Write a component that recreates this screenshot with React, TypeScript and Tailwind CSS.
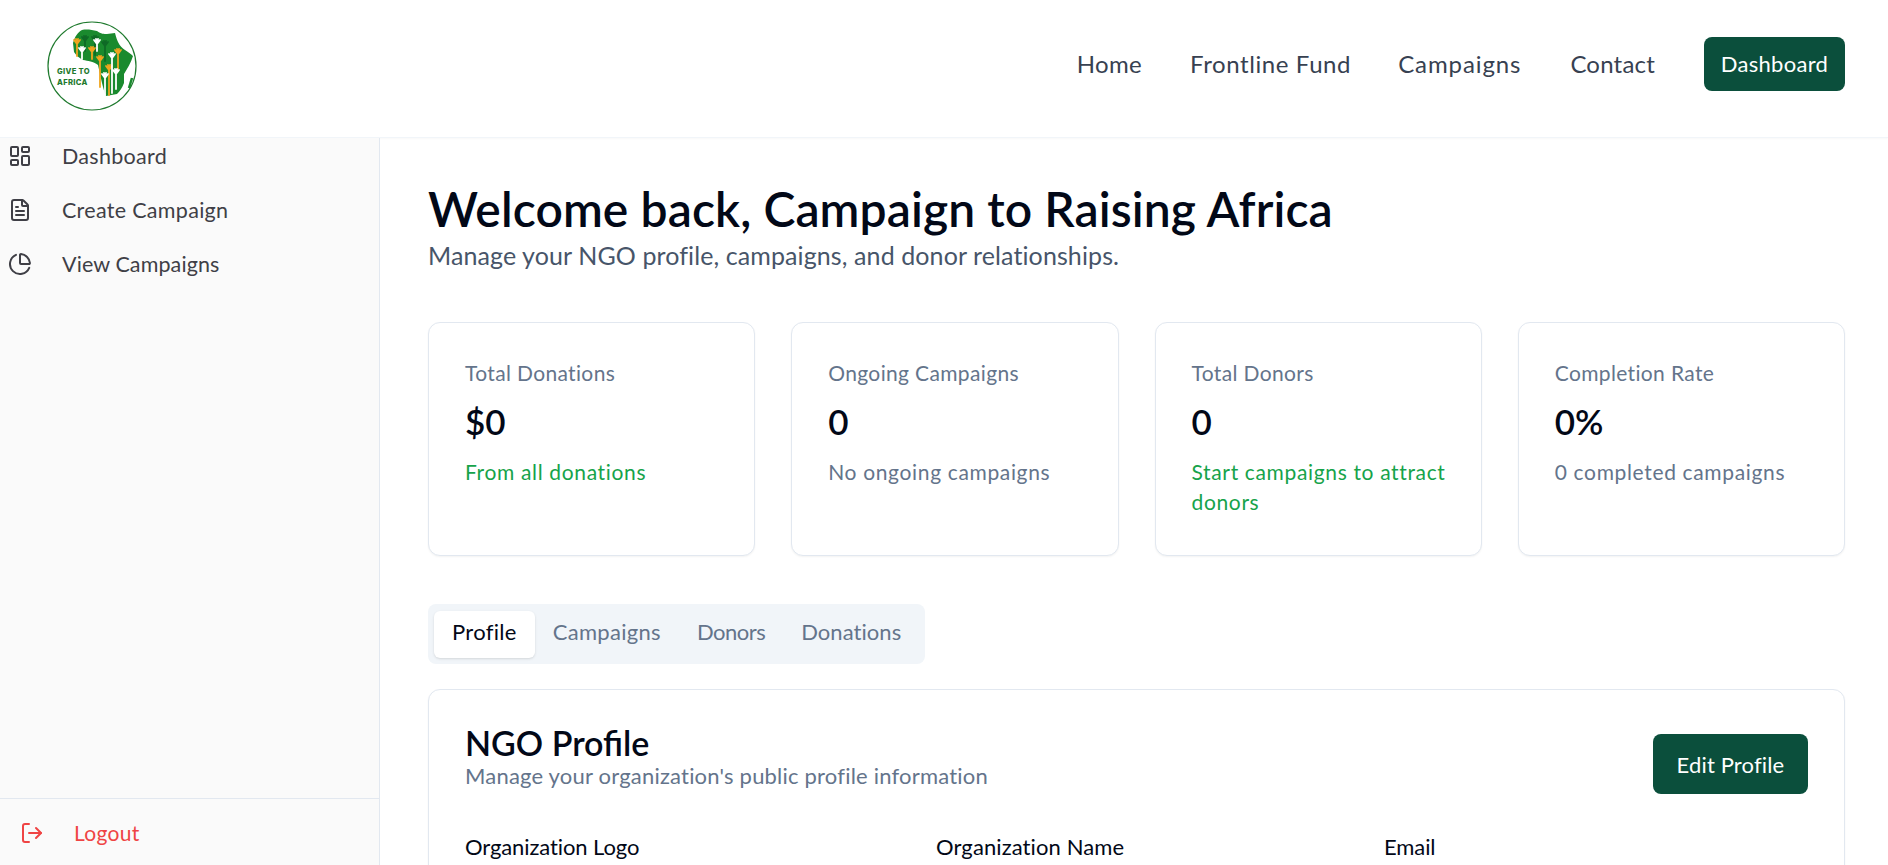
import { LayoutDashboard, FileText, PieChart, LogOut } from "lucide-react";

const font = "font-['Lato','Noto_Sans',sans-serif]";

// x, top of the fingers, bottom of the arm, colour
const hands: [number, number, number, string][] = [
  [38, 15, 30, "#0f6a26"],
  [48, 15, 34, "#0f6a26"],
  [58, 20, 40, "#0f6a26"],
  [30, 18, 35, "#f0a51e"],
  [45, 26, 38, "#f0a51e"],
  [53, 35, 66, "#f0a51e"],
  [62, 44, 74, "#f0a51e"],
  [71, 28, 50, "#f0a51e"],
  [35, 26, 38, "#fff"],
  [50, 18, 30, "#fff"],
  [65, 32, 72, "#fff"],
  [58, 52, 74, "#fff"],
  [69, 48, 68, "#fff"],
];

function Logo() {
  return (
    <svg viewBox="0 0 90 90" className="mt-[5px] h-[90px] w-[90px]">
      <circle cx="45" cy="45" r="44" fill="#fff" stroke="#1f7a2e" strokeWidth="1.2" />
      <path
        d="M26 22 C28 15 31 11 35 9 C40 8 45 9 50 10 C54 13 57 13 60 13 L68 12 C69 16 70 19 71 21 C73 25 75 27 78 29 C81 31 84 33 86 35 C84 42 80 48 77 53 L77 62 C75 67 73 70 70 73 L59 75 C57 70 56 66 55 62 L51 44 C46 40 41 40 36 39 C32 37 29 34 27 31 Z"
        fill="#1a8a2e"
      />
      <path d="M85 57 L82 67" stroke="#1a8a2e" strokeWidth="2.5" />
      {hands.map(([x, top, bottom, color], i) => (
        <path
          key={i}
          d={`M${x} ${bottom} V${top + 5} M${x} ${top + 5} l-3 -4 M${x} ${top + 5} l-1 -5 M${x} ${top + 5} l1 -5 M${x} ${top + 5} l3 -4`}
          stroke={color}
          strokeWidth="1.8"
          strokeLinecap="round"
          fill="none"
        />
      ))}
      <text x="10" y="53" fontSize="7.6" fontWeight="800" fill="#1f7a2e" fontFamily="Inter, sans-serif">GIVE TO</text>
      <text x="10" y="64" fontSize="7.6" fontWeight="800" fill="#1f7a2e" fontFamily="Inter, sans-serif">AFRICA</text>
    </svg>
  );
}

function Stat({ label, value, note, green }: { label: string; value: string; note: string; green?: boolean }) {
  return (
    <div className="h-[234px] rounded-xl border border-[#e2e8f0] bg-white pl-9 pr-[28px] pt-[36px] shadow-[0_1px_2px_rgba(0,0,0,0.05)]">
      <p className="text-[21px] leading-7 tracking-[0.35px] text-[#64748b]">{label}</p>
      <p className="mt-[14px] text-[35px] font-semibold leading-10 tracking-normal text-[#020817]">{value}</p>
      <p className={`mt-[16px] text-[21px] leading-[30px] tracking-[0.65px] ${green ? "text-[#16a34a]" : "text-[#64748b]"}`}>{note}</p>
    </div>
  );
}

export default function App() {
  return (
    <div className={`${font} h-[865px] w-[1888px] overflow-hidden bg-white tracking-[0.3px]`}>
      <header className="flex h-[138px] items-center justify-between border-b border-[#f1f5f9] bg-white pb-[10px] pl-[47px] pr-[43px] shadow-[0_1px_2px_rgba(0,0,0,0.03)]">
        <Logo />
        <nav className="flex items-center gap-[49px] text-[24px] tracking-[0.3px] text-[#374151]">
          <a>Home</a>
          <a className="-ml-[1px] tracking-[0.6px]">Frontline Fund</a>
          <a className="-ml-[2px] tracking-[0.9px]">Campaigns</a>
          <a className="tracking-[0.2px]">Contact</a>
          <button className="h-[54px] w-[141px] rounded-lg bg-[#0b4f3c] text-[22px] text-white">Dashboard</button>
        </nav>
      </header>
      <div className="flex h-[727px]">
        <aside className="flex w-[380px] flex-col justify-between border-r border-[#e2e8f0] bg-[#fafafa]">
          <div className="flex flex-col gap-[22px] pl-[8px] pt-[2px] text-[21.5px] text-[#3f3f46]">
            <div className="flex h-[32px] items-center gap-[30px]"><LayoutDashboard size={24} strokeWidth={2} />Dashboard</div>
            <div className="flex h-[32px] items-center gap-[30px]"><FileText size={24} strokeWidth={2} />Create Campaign</div>
            <div className="flex h-[32px] items-center gap-[30px] tracking-[0.1px]"><PieChart size={24} strokeWidth={2} />View Campaigns</div>
          </div>
          <div className="flex h-[67px] items-center gap-[30px] border-t border-[#e2e8f0] pl-[20px] pt-[2px] text-[21px] text-[#ef4444]">
            <LogOut size={24} strokeWidth={2} />Logout
          </div>
        </aside>
        <main className="flex-1 pl-[48px] pr-[43px] pt-[45px]">
          <h1 className="text-[48px] font-semibold leading-[52px] tracking-[0.1px] text-[#020817]">Welcome back, Campaign to Raising Africa</h1>
          <p className="mt-[4px] text-[25px] leading-8 tracking-[0.1px] text-[#475569]">Manage your NGO profile, campaigns, and donor relationships.</p>
          <div className="mt-[51px] grid grid-cols-4 gap-9">
            <Stat label="Total Donations" value="$0" note="From all donations" green />
            <Stat label="Ongoing Campaigns" value="0" note="No ongoing campaigns" />
            <Stat label="Total Donors" value="0" note="Start campaigns to attract donors" green />
            <Stat label="Completion Rate" value="0%" note="0 completed campaigns" />
          </div>
          <div className="mt-[48px] inline-flex h-[60px] items-center rounded-lg bg-[#f1f5f9] px-[6px] text-[22px] text-[#64748b]">
            <span className="rounded-md bg-white px-[18px] pb-[10px] pt-[4px] text-[#020817] shadow-sm">Profile</span>
            <span className="px-[18px] pb-[5px]">Campaigns</span>
            <span className="px-[18px] pb-[5px] tracking-[-0.5px]">Donors</span>
            <span className="px-[18px] pb-[5px] tracking-[0.05px]">Donations</span>
          </div>
          <section className="mt-[25px] h-[300px] rounded-xl border border-[#e2e8f0] bg-white px-9 pt-[33px] shadow-[0_1px_2px_rgba(0,0,0,0.05)]">
            <div className="flex items-start justify-between">
              <div>
                <h2 className="text-[34px] font-semibold leading-[39px] tracking-normal text-[#020817]">NGO Profile</h2>
                <p className="text-[22px] leading-7 tracking-[0.2px] text-[#64748b]">Manage your organization's public profile information</p>
              </div>
              <button className="mt-[11px] h-[60px] w-[155px] rounded-lg bg-[#0b4f3c] text-[22px] tracking-[0.15px] text-white">Edit Profile</button>
            </div>
            <div className="mt-[36px] grid grid-cols-[471px_448px_1fr] text-[22px] tracking-[-0.1px] text-[#020817]">
              <span>Organization Logo</span>
              <span className="tracking-[0.1px]">Organization Name</span>
              <span>Email</span>
            </div>
          </section>
        </main>
      </div>
    </div>
  );
}
